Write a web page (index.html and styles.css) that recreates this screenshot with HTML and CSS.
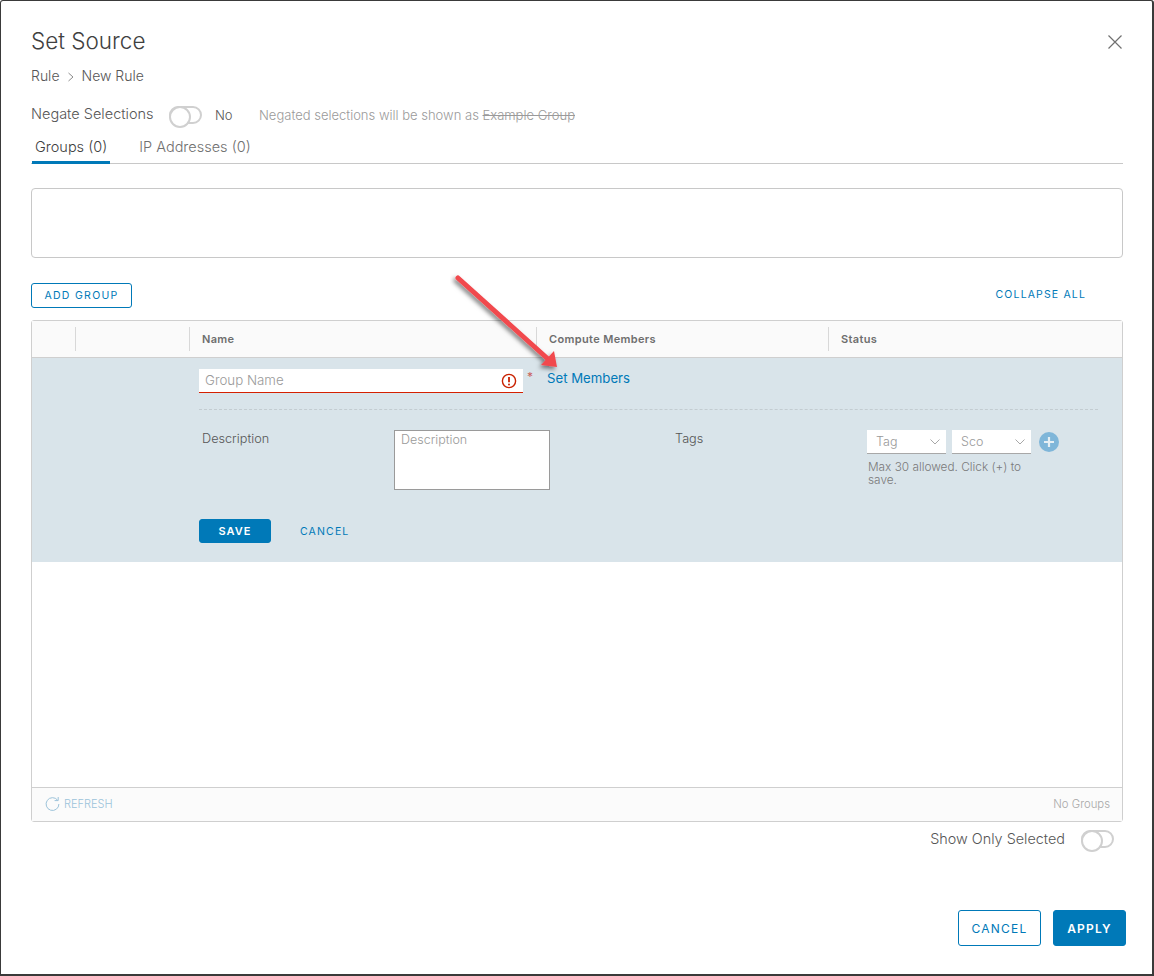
FILE: index.html
```html
<!DOCTYPE html>
<html lang="en">
<head>
    <meta charset="UTF-8">
    <title>Set Source</title>
    <link rel="stylesheet" href="styles.css">
</head>
<body>
    <div class="dialog">
        <div class="title-row">
            <h1 class="title">Set Source</h1>
            <svg class="close-icon" width="16" height="16" viewBox="0 0 16 16"><path d="M1.5 1.5L14.5 14.5M14.5 1.5L1.5 14.5" stroke="#707070" stroke-width="1.2" fill="none"/></svg>
        </div>

        <div class="breadcrumb">
            <span>Rule</span>
            <svg width="8" height="10" viewBox="0 0 8 10"><path d="M1.5 1L6 5L1.5 9" stroke="#8c8c8c" stroke-width="1" fill="none"/></svg>
            <span>New Rule</span>
        </div>

        <div class="negate-row">
            <span class="negate-label">Negate Selections</span>
            <span class="toggle"></span>
            <span class="negate-value">No</span>
            <span class="negate-hint">Negated selections will be shown as <s>Example Group</s></span>
        </div>

        <div class="tabs">
            <button class="tablink active">Groups (0)</button>
            <button class="tablink">IP Addresses (0)</button>
        </div>

        <div class="selection-box"></div>

        <div class="grid-actions">
            <button class="btn-outline btn-small">ADD GROUP</button>
            <a class="collapse-link">COLLAPSE ALL</a>
        </div>

        <div class="grid">
            <div class="grid-header">
                <div class="col col-check"></div>
                <div class="col col-expand"></div>
                <div class="col col-name">Name</div>
                <div class="col col-members">Compute Members</div>
                <div class="col col-status">Status</div>
            </div>

            <div class="grid-body">
                <div class="edit-row">
                    <div class="edit-top">
                        <div class="name-input">
                            <input type="text" placeholder="Group Name">
                            <svg width="16" height="16" viewBox="0 0 16 16"><circle cx="8" cy="8" r="6.6" stroke="#c92100" stroke-width="1.4" fill="none"/><path d="M8 4V9.2" stroke="#c92100" stroke-width="1.8"/><circle cx="8" cy="11.4" r="1" fill="#c92100"/></svg>
                        </div>
                        <span class="required">*</span>
                        <a class="set-members">Set Members</a>
                    </div>

                    <div class="edit-fields">
                        <label class="field-label">Description</label>
                        <textarea class="description" placeholder="Description"></textarea>
                        <label class="field-label tags-label">Tags</label>
                        <div class="tags">
                            <div class="tag-inputs">
                                <div class="tag-select">Tag
                                    <svg width="12" height="8" viewBox="0 0 12 8"><path d="M1.5 1.5L6 6L10.5 1.5" stroke="#a8a8a8" stroke-width="1" fill="none"/></svg>
                                </div>
                                <div class="tag-select">Sco
                                    <svg width="12" height="8" viewBox="0 0 12 8"><path d="M1.5 1.5L6 6L10.5 1.5" stroke="#a8a8a8" stroke-width="1" fill="none"/></svg>
                                </div>
                                <svg class="tag-add" width="20" height="20" viewBox="0 0 20 20"><circle cx="10" cy="10" r="10" fill="#7fb6d9"/><path d="M10 5V15M5 10H15" stroke="#e6eff4" stroke-width="2.2"/></svg>
                            </div>
                            <p class="tag-help">Max 30 allowed. Click (+) to save.</p>
                        </div>
                    </div>

                    <div class="edit-actions">
                        <button class="btn-solid btn-small">SAVE</button>
                        <a class="cancel-link">CANCEL</a>
                    </div>
                </div>
            </div>

            <div class="grid-footer">
                <span class="refresh">
                    <svg width="15" height="15" viewBox="0 0 15 15"><path d="M12.6 4.2A6.4 6.4 0 1 0 13.9 8" stroke="#9cc3da" stroke-width="1" fill="none"/><path d="M13.2 1V4.6H9.6" stroke="#9cc3da" stroke-width="1" fill="none"/></svg>
                    REFRESH
                </span>
                <span class="no-groups">No Groups</span>
            </div>
        </div>

        <div class="show-selected">
            <span class="show-label">Show Only Selected</span>
            <span class="toggle"></span>
        </div>

        <div class="dialog-actions">
            <button class="btn-outline btn-large">CANCEL</button>
            <button class="btn-solid btn-large">APPLY</button>
        </div>

        <!-- red annotation arrow drawn over the grid -->
        <svg class="annotation" width="120" height="110" viewBox="0 0 120 110">
            <defs>
                <filter id="arrow-shadow" x="-20%" y="-20%" width="140%" height="140%">
                    <feDropShadow dx="-2" dy="2.5" stdDeviation="2" flood-color="#000" flood-opacity="0.5"/>
                </filter>
            </defs>
            <g filter="url(#arrow-shadow)">
                <path d="M8 10L98 91" stroke="#f1484d" stroke-width="5" stroke-linecap="round" fill="none"/>
                <path d="M107 99L91 97L104 83Z" fill="#f1484d"/>
            </g>
        </svg>
    </div>
</body>
</html>
```

FILE: styles.css
```css
* {
    box-sizing: border-box;
}

body {
    margin: 0;
    padding: 0;
    font-family: Inter, "Open Sans", sans-serif;
    background-color: #fff;
    color: #565656;
}

.dialog {
    position: relative;
    width: 1154px;
    height: 976px;
    padding: 0 29px 0 30px;
    background: #fff;
    border: 1px solid #3a3a3a;
    border-right-width: 2px;
    border-bottom-width: 2px;
    border-top-left-radius: 3px;
    border-top-right-radius: 3px;
}

.title-row {
    display: flex;
    justify-content: space-between;
    align-items: center;
    height: 28px;
    margin-top: 26px;
}

.title {
    margin: 0 0 2px;
    font-size: 22.5px;
    font-weight: 300;
    color: #404040;
}

.close-icon {
    position: relative;
    top: 1px;
}

.breadcrumb {
    display: flex;
    align-items: center;
    gap: 7px;
    height: 18px;
    margin-top: 11px;
    font-size: 14px;
    font-weight: 300;
}

.breadcrumb svg {
    margin-top: 3px;
}

.negate-row {
    display: flex;
    align-items: center;
    height: 20px;
    margin-top: 21px;
    font-size: 14.5px;
    font-weight: 300;
}

.negate-label {
    position: relative;
    top: -2px;
    width: 138px;
}

.negate-value {
    width: 44px;
    margin-left: 13px;
    font-size: 13px;
}

.negate-hint {
    font-size: 13px;
    color: #9a9a9a;
}

.toggle {
    position: relative;
    display: inline-block;
    flex: none;
    width: 33px;
    height: 18px;
    border: 2px solid #d0d0d0;
    border-radius: 9px;
    background: #fff;
}

.toggle::before {
    content: "";
    position: absolute;
    left: -2px;
    top: -2px;
    width: 18px;
    height: 18px;
    border: 2px solid #d0d0d0;
    border-radius: 50%;
    background: #fff;
}

.tabs {
    display: flex;
    gap: 26px;
    height: 30px;
    margin-top: 9px;
    padding-left: 1px;
    border-bottom: 1px solid #c8c8c8;
}

.tablink {
    height: 30px;
    padding: 0 3px 3px;
    border: none;
    border-bottom: 3px solid transparent;
    background: none;
    font-family: inherit;
    font-size: 14.5px;
    font-weight: 300;
    color: #707070;
}

.tablink.active {
    border-bottom-color: #0079b8;
    color: #404040;
}

.selection-box {
    height: 70px;
    margin-top: 24px;
    border: 1px solid #c8c8c8;
    border-radius: 4px;
}

.grid-actions {
    display: flex;
    justify-content: space-between;
    align-items: center;
    height: 25px;
    margin-top: 25px;
    padding-right: 37px;
}

.btn-outline,
.btn-solid {
    border-radius: 3px;
    font-family: inherit;
    cursor: pointer;
}

.btn-outline {
    border: 1px solid #0079b8;
    background: #fff;
    color: #0079b8;
    font-weight: 400;
}

.btn-solid {
    border: 1px solid #0079b8;
    background: #0079b8;
    color: #fff;
    font-weight: 600;
}

.btn-small {
    height: 24px;
    font-size: 10.5px;
    letter-spacing: 1.3px;
}

.grid-actions .btn-small {
    width: 101px;
    height: 25px;
    padding: 0;
}

.collapse-link,
.cancel-link {
    font-size: 10.5px;
    letter-spacing: 1.15px;
    color: #0079b8;
}

.collapse-link {
    margin-bottom: 2px;
}

.grid {
    display: flex;
    flex-direction: column;
    height: 502px;
    margin-top: 12px;
    border: 1px solid #cfcfcf;
    border-radius: 3px;
}

.grid-header {
    display: flex;
    flex: none;
    align-items: center;
    height: 37px;
    border-bottom: 1px solid #cfcfcf;
    background: #fafafa;
    font-size: 11px;
    font-weight: 600;
    letter-spacing: 0.35px;
    color: #6e6e6e;
}

.col {
    display: flex;
    align-items: center;
    height: 24px;
    padding-left: 12px;
    border-right: 1px solid #d8d8d8;
}

.col-check {
    width: 44px;
}

.col-expand {
    width: 114px;
}

.col-name {
    width: 347px;
}

.col-members {
    width: 292px;
}

.col-status {
    flex: 1;
    border-right: none;
}

.grid-body {
    flex: 1;
}

.edit-row {
    height: 204px;
    padding: 11px 24px 0 167px;
    background: #d9e4ea;
}

.edit-top {
    display: flex;
    height: 41px;
    border-bottom: 1px dashed #c3ccd1;
}

.name-input {
    display: flex;
    align-items: center;
    width: 324px;
    height: 24px;
    padding-right: 6px;
    border-bottom: 1px solid #d42000;
    background: #fff;
}

.name-input input {
    flex: 1;
    min-width: 0;
    margin-bottom: 2px;
    padding: 0 0 0 6px;
    border: none;
    outline: none;
    background: none;
    font-family: inherit;
    font-size: 13.3px;
    font-weight: 300;
}

input::placeholder,
textarea::placeholder {
    color: #9a9a9a;
    opacity: 1;
}

.required {
    width: 24px;
    padding-left: 4px;
    font-size: 12px;
    color: #c9605a;
}

.set-members {
    margin-top: 1px;
    font-size: 13.2px;
    color: #0079b8;
}

.edit-fields {
    display: flex;
    align-items: flex-start;
    height: 109px;
    padding-top: 20px;
}

.field-label {
    width: 192px;
    margin-top: 1px;
    margin-left: 3px;
    font-size: 12.7px;
    font-weight: 300;
    color: #565656;
}

.description {
    width: 156px;
    height: 60px;
    padding: 1px 6px;
    border: 1px solid #9a9a9a;
    border-radius: 0;
    background: #fff;
    font-family: inherit;
    font-size: 12.5px;
    font-weight: 300;
    resize: none;
}

.tags-label {
    width: 192px;
    margin-left: 125px;
}

.tag-inputs {
    display: flex;
    align-items: center;
    gap: 6px;
}

.tag-select {
    display: flex;
    justify-content: space-between;
    align-items: center;
    width: 79px;
    height: 24px;
    padding: 0 5px 0 9px;
    border-bottom: 1px solid #a8a8a8;
    background: #fff;
    font-size: 12.5px;
    font-weight: 300;
    color: #9a9a9a;
}

.tag-add {
    margin-left: 2px;
}

.tag-help {
    width: 160px;
    margin: 7px 0 0 1px;
    font-size: 11.8px;
    font-weight: 300;
    line-height: 13px;
    color: #7a7a7a;
}

.edit-actions {
    display: flex;
    align-items: center;
    gap: 29px;
}

.edit-actions .btn-small {
    width: 72px;
    padding: 0;
    font-size: 11px;
    letter-spacing: 1px;
}

.grid-footer {
    display: flex;
    flex: none;
    justify-content: space-between;
    align-items: center;
    height: 34px;
    padding: 0 12px 2px 13px;
    border-top: 1px solid #cfcfcf;
    background: #fbfbfb;
    font-size: 11px;
    font-weight: 300;
}

.refresh {
    display: flex;
    align-items: center;
    gap: 4px;
    color: #9cc3da;
}

.no-groups {
    font-size: 11.3px;
    color: #a8a8a8;
}

.show-selected {
    display: flex;
    justify-content: flex-end;
    align-items: center;
    gap: 16px;
    height: 20px;
    margin-top: 7px;
    padding-right: 9px;
    font-size: 14.4px;
    font-weight: 300;
}

.show-label {
    margin-bottom: 2px;
}

.dialog-actions {
    display: flex;
    justify-content: flex-end;
    gap: 12px;
    margin-top: 61px;
    margin-right: -3px;
}

.btn-large {
    height: 36px;
    padding: 0;
    font-size: 12px;
    letter-spacing: 1.2px;
}

.dialog-actions .btn-outline {
    width: 83px;
}

.dialog-actions .btn-solid {
    width: 73px;
}

.annotation {
    position: absolute;
    left: 449px;
    top: 267px;
    pointer-events: none;
}
```
